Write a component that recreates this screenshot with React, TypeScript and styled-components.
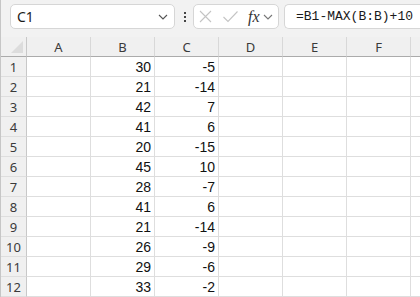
import React from 'react'
import styled, { createGlobalStyle } from 'styled-components'

const GlobalStyle = createGlobalStyle`
  html, body {
    margin: 0;
    padding: 0;
    background: #ffffff;
  }
  body {
    font-family: 'Noto Sans', 'Liberation Sans', sans-serif;
    overflow: hidden;
  }
`

// G is only a sliver at the right edge, its letter is out of view
const colsLetters = ['A', 'B', 'C', 'D', 'E', 'F', '']

const rows: [number, number][] = [
  [30, -5],
  [21, -14],
  [42, 7],
  [41, 6],
  [20, -15],
  [45, 10],
  [28, -7],
  [41, 6],
  [21, -14],
  [26, -9],
  [29, -6],
  [33, -2],
]

const Window = styled.div`
  width: 420px;
  height: 297px;
  border-left: 1px solid #c6c6c6;
  box-sizing: border-box;
  overflow: hidden;
  background: #ffffff;
`

const Toolbar = styled.div`
  display: flex;
  align-items: center;
  height: 37px;
  padding: 4px 0 8px 9px;
  box-sizing: border-box;
  background: #f2f2f2;
`

const NameBox = styled.div`
  display: flex;
  align-items: center;
  justify-content: space-between;
  width: 165px;
  height: 25px;
  box-sizing: border-box;
  padding: 0 6px 0 6px;
  background: #ffffff;
  border: 1px solid #d6d6d6;
  border-radius: 5px;
  font-size: 14px;
  color: #1a1a1a;
`

const Dots = styled.div`
  display: flex;
  flex-direction: column;
  gap: 2px;
  margin: 0 7px 0 9px;
  span {
    width: 2px;
    height: 2px;
    background: #444;
  }
`

const FxBox = styled.div`
  display: flex;
  align-items: center;
  width: 86px;
  height: 25px;
  box-sizing: border-box;
  padding: 0 3px 0 4px;
  background: #ffffff;
  border: 1px solid #d6d6d6;
  border-radius: 5px;
`

const Fx = styled.span`
  font-family: 'Liberation Serif', serif;
  font-style: italic;
  font-size: 16px;
  color: #333;
  margin: 0 3px 0 9px;
`

const FormulaBox = styled.div`
  display: flex;
  align-items: center;
  flex: 1;
  height: 25px;
  margin-left: 5px;
  box-sizing: border-box;
  padding-left: 11px;
  background: #ffffff;
  border: 1px solid #d6d6d6;
  border-right: none;
  border-radius: 5px 0 0 5px;
  font-family: 'Liberation Mono', 'DejaVu Sans Mono', monospace;
  font-size: 13px;
  color: #1a1a1a;
  white-space: nowrap;
  overflow: hidden;
`

const Sheet = styled.div`
  display: grid;
  grid-template-columns: 26px repeat(7, 64px);
  grid-auto-rows: 20px;
`

const Cell = styled.div<{ $head?: boolean; $row?: boolean; $num?: boolean }>`
  box-sizing: border-box;
  border-right: 1px solid ${({ $head }) => ($head ? '#d8d8d8' : '#dedede')};
  border-bottom: 1px solid ${({ $head }) => ($head ? '#ababab' : '#dedede')};
  background: ${({ $head, $row }) => ($head || $row ? '#f0f0f0' : '#ffffff')};
  display: flex;
  align-items: center;
  justify-content: ${({ $num }) => ($num ? 'flex-end' : 'center')};
  padding: ${({ $num }) => ($num ? '1px 3px 0 0' : '0')};
  font-family: ${({ $num }) =>
    $num ? "'Liberation Sans', Arial, sans-serif" : "'Noto Sans', sans-serif"};
  font-size: ${({ $num }) => ($num ? '14px' : '13px')};
  color: ${({ $num }) => ($num ? '#111' : '#3a3a3a')};
  ${({ $row }) => $row && 'border-right-color: #c8c8c8;'}
`

const Corner = styled(Cell)`
  position: relative;
  border-right-color: #c8c8c8;
  svg {
    position: absolute;
    right: 3px;
    bottom: 3px;
  }
`

const Chevron = ({ color = '#555' }: { color?: string }) => (
  <svg width="10" height="6" viewBox="0 0 10 6">
    <path d="M1 1 L5 5 L9 1" fill="none" stroke={color} strokeWidth="1.1" />
  </svg>
)

export default function App() {
  return (
    <>
      <GlobalStyle />
      <Window>
        <Toolbar>
          <NameBox>
            <span>C1</span>
            <Chevron />
          </NameBox>
          <Dots>
            <span />
            <span />
            <span />
          </Dots>
          <FxBox>
            <svg width="15" height="15" viewBox="0 0 15 15">
              <path d="M2 2 L13 13 M13 2 L2 13" stroke="#c4c4c4" strokeWidth="1.1" />
            </svg>
            <svg width="17" height="15" viewBox="0 0 17 15" style={{ marginLeft: 9 }}>
              <path d="M1.5 8 L6 12.5 L15.5 2.5" fill="none" stroke="#c4c4c4" strokeWidth="1.1" />
            </svg>
            <Fx>fx</Fx>
            <Chevron color="#777" />
          </FxBox>
          <FormulaBox>=B1-MAX(B:B)+10</FormulaBox>
        </Toolbar>
        <Sheet>
          <Corner $head>
            <svg width="12" height="12" viewBox="0 0 12 12">
              <path d="M12 0 L12 12 L0 12 Z" fill="#dcdcdc" />
            </svg>
          </Corner>
          {colsLetters.map((c, i) => (
            <Cell key={i} $head>
              {c}
            </Cell>
          ))}
          {rows.map(([b, c], i) => (
            <React.Fragment key={i}>
              <Cell $row>{i + 1}</Cell>
              <Cell />
              <Cell $num>{b}</Cell>
              <Cell $num>{c}</Cell>
              <Cell />
              <Cell />
              <Cell />
              <Cell />
            </React.Fragment>
          ))}
        </Sheet>
      </Window>
    </>
  )
}
